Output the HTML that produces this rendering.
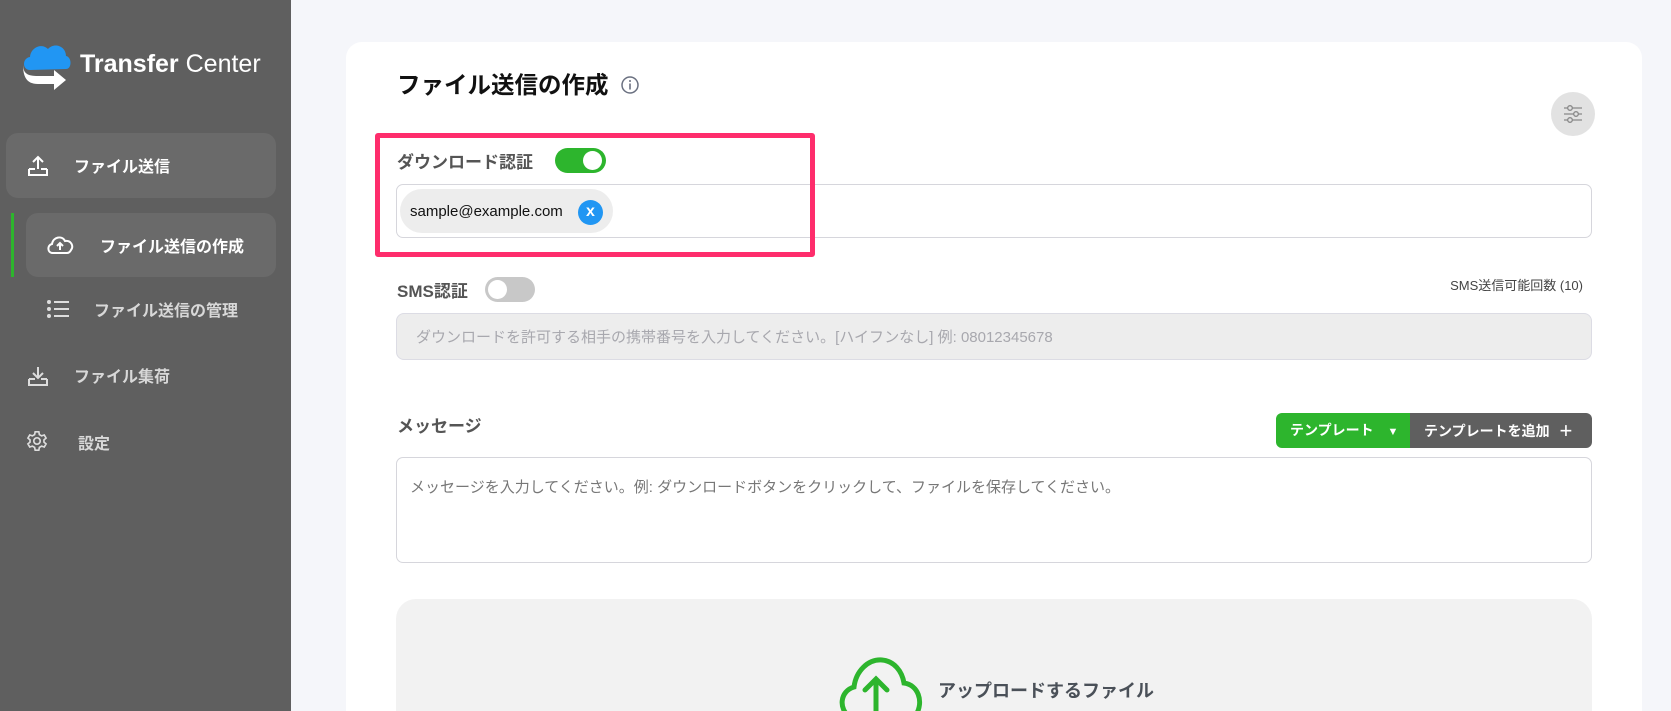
<!DOCTYPE html>
<html><head><meta charset="utf-8"><style>
*{box-sizing:border-box;margin:0;padding:0}
html{overflow:hidden;height:711px;background:#f5f6fa}
body{width:1671px;height:711px;overflow:hidden;font-family:"Liberation Sans","Noto Sans CJK JP",sans-serif}
#w{position:relative;width:1671px;height:711px;overflow:hidden;background:#f5f6fa}
.a{position:absolute}
.sb{left:0;top:0;width:291px;height:711px;background:#5f5f5f}
.nav{color:#fff;font-weight:bold;font-size:16px}
.navd{color:#d8d8d8;font-weight:bold;font-size:16px}
.card{left:346px;top:42px;width:1296px;height:700px;background:#fff;border-radius:16px}
.lbl{color:#555;font-weight:bold;font-size:17px}
.inp{border:1px solid #d6d6dc;border-radius:7px}
</style></head><body><div id="w">
<div class="a sb">
 <svg class="a" style="left:20px;top:40px" width="54" height="50" viewBox="0 0 54 50">
  <path d="M10 30 C2 30 2 18 10 17 C11 7 22 3 28 9 C34 2 46 6 46 16 C52 17 52 29 46 29 Z" fill="#2196f3"/>
  <path d="M3 24 C3 34 8 36 18 36 L34 36 L34 30 L46 40 L34 50 L34 44 L18 44 C6 44 3 36 3 24 Z" fill="#fff"/>
 </svg>
 <div class="a" style="left:80px;top:50px;color:#fff;font-size:25px;"><span style="font-weight:600">Transfer</span> Center</div>
 <div class="a" style="left:6px;top:133px;width:270px;height:65px;background:#6a6a6a;border-radius:12px"></div>
 <svg class="a" style="left:26px;top:154px" width="24" height="24" viewBox="0 0 24 24" fill="none" stroke="#fff" stroke-width="2"><path d="M12 15V3M7 8l5-5 5 5M3 15v6h18v-6M3 15h6M15 15h6"/></svg>
 <div class="a nav" style="left:74px;top:153px">ファイル送信</div>
 <div class="a" style="left:11px;top:213px;width:3px;height:64px;background:#2db52d"></div>
 <div class="a" style="left:26px;top:213px;width:250px;height:64px;background:#6a6a6a;border-radius:12px"></div>
 <svg class="a" style="left:45px;top:233px" width="30" height="24" viewBox="0 0 30 24" fill="none" stroke="#fff" stroke-width="2"><path d="M8 20C2 20 2 12 7 11 8 4 17 2 20 8 26 7 29 13 26 17 25 19 24 20 22 20Z"/><path d="M15 17V10M12 13l3-3 3 3"/></svg>
 <div class="a nav" style="left:100px;top:233px">ファイル送信の作成</div>
 <svg class="a" style="left:46px;top:299px" width="24" height="20" viewBox="0 0 24 20" fill="#ddd"><circle cx="3" cy="3" r="2"/><circle cx="3" cy="10" r="2"/><circle cx="3" cy="17" r="2"/><rect x="8" y="2" width="15" height="2"/><rect x="8" y="9" width="15" height="2"/><rect x="8" y="16" width="15" height="2"/></svg>
 <div class="a navd" style="left:94px;top:297px">ファイル送信の管理</div>
 <svg class="a" style="left:26px;top:364px" width="24" height="24" viewBox="0 0 24 24" fill="none" stroke="#ddd" stroke-width="2"><path d="M12 3v11M7 9l5 5 5-5M3 15v6h18v-6M3 15h6M15 15h6"/></svg>
 <div class="a navd" style="left:74px;top:363px">ファイル集荷</div>
 <svg class="a" style="left:26px;top:430px" width="22" height="22" viewBox="0 0 24 24" fill="none" stroke="#ddd" stroke-width="1.8"><circle cx="12" cy="12" r="3.5"/><path d="M10 2h4l.6 3 2.4 1.4 2.9-1 2 3.4-2.3 2v2.4l2.3 2-2 3.4-2.9-1L14.6 19 14 22h-4l-.6-3L7 17.6l-2.9 1-2-3.4 2.3-2v-2.4l-2.3-2 2-3.4 2.9 1L9.4 5z"/></svg>
 <div class="a navd" style="left:78px;top:430px">設定</div>
</div>
<div class="a card"></div>
<div class="a" style="left:397px;top:66px;font-size:23.5px;font-weight:bold;color:#111">ファイル送信の作成</div>
<svg class="a" style="left:620px;top:75px" width="20" height="20" viewBox="0 0 20 20"><circle cx="10" cy="10" r="8" fill="none" stroke="#6a7080" stroke-width="1.5"/><rect x="9.2" y="8.5" width="1.6" height="6" fill="#6a7080"/><circle cx="10" cy="6" r="1" fill="#6a7080"/></svg>
<div class="a" style="left:1551px;top:92px;width:44px;height:44px;border-radius:50%;background:#e2e2e2"></div>
<svg class="a" style="left:1562px;top:102px" width="22" height="24" viewBox="0 0 22 24" fill="none" stroke="#888" stroke-width="1.3"><path d="M2 6h18M2 12h18M2 18h18"/><circle cx="8" cy="6" r="2.3" fill="#e2e2e2"/><circle cx="14" cy="12" r="2.3" fill="#e2e2e2"/><circle cx="8" cy="18" r="2.3" fill="#e2e2e2"/></svg>
<div class="a lbl" style="left:397px;top:148px">ダウンロード認証</div>
<div class="a" style="left:555px;top:148px;width:51px;height:25px;border-radius:13px;background:#2db52d"></div>
<div class="a" style="left:583px;top:151px;width:19px;height:19px;border-radius:50%;background:#fff"></div>
<div class="a inp" style="left:396px;top:184px;width:1196px;height:54px"></div>
<div class="a" style="left:400px;top:189px;width:213px;height:44px;border-radius:22px;background:#ededed"></div>
<div class="a" style="left:410px;top:203px;font-size:15px;color:#111">sample@example.com</div>
<div class="a" style="left:578px;top:200px;width:25px;height:25px;border-radius:50%;background:#2196f3;color:#fff;font-weight:bold;font-size:16px;text-align:center;line-height:23px">x</div>
<div class="a" style="left:375px;top:133px;width:440px;height:124px;border:5px solid #fe2d6c;border-radius:3px"></div>
<div class="a lbl" style="left:397px;top:277px">SMS認証</div>
<div class="a" style="left:485px;top:277px;width:50px;height:25px;border-radius:13px;background:#c8c8c8"></div>
<div class="a" style="left:488px;top:280px;width:19px;height:19px;border-radius:50%;background:#fff"></div>
<div class="a" style="left:1400px;top:275px;width:183px;text-align:right;font-size:13px;color:#444">SMS送信可能回数 (10)</div>
<div class="a" style="left:396px;top:313px;width:1196px;height:47px;background:#ededed;border:1px solid #dcdce4;border-radius:8px"></div>
<div class="a" style="left:416px;top:326px;font-size:15px;color:#a8a8ae">ダウンロードを許可する相手の携帯番号を入力してください。[ハイフンなし] 例: 08012345678</div>
<div class="a lbl" style="left:397px;top:412px">メッセージ</div>
<div class="a" style="left:1276px;top:413px;width:134px;height:35px;background:#2db52d;border-radius:6px 0 0 6px;color:#fff;font-weight:bold;font-size:14px;line-height:35px;padding-left:14px">テンプレート <span style="font-size:11px;margin-left:10px">▼</span></div>
<div class="a" style="left:1410px;top:413px;width:182px;height:35px;background:#5f5f5f;border-radius:0 6px 6px 0;color:#fff;font-weight:bold;font-size:14px;line-height:35px;padding-left:14px">テンプレートを追加 <span style="font-size:22px;font-weight:normal;vertical-align:-2px;margin-left:6px">+</span></div>
<div class="a inp" style="left:396px;top:457px;width:1196px;height:106px"></div>
<div class="a" style="left:410px;top:476px;font-size:15px;color:#777">メッセージを入力してください。例: ダウンロードボタンをクリックして、ファイルを保存してください。</div>
<div class="a" style="left:396px;top:599px;width:1196px;height:200px;background:#f2f2f2;border-radius:20px"></div>
<svg class="a" style="left:836px;top:657px" width="88" height="60" viewBox="0 0 88 60" fill="none" stroke="#2db52d" stroke-width="5" stroke-linecap="round"><path d="M14 60C2 52 4 34 18 30 20 14 32 2 46 3 58 4 66 14 68 26 82 28 88 44 80 58"/><path d="M40 60V23M29 33l11-11 11 11"/></svg>
<div class="a" style="left:938px;top:677px;font-size:18px;font-weight:bold;color:#4a5058">アップロードするファイル</div>
</div></body></html>
